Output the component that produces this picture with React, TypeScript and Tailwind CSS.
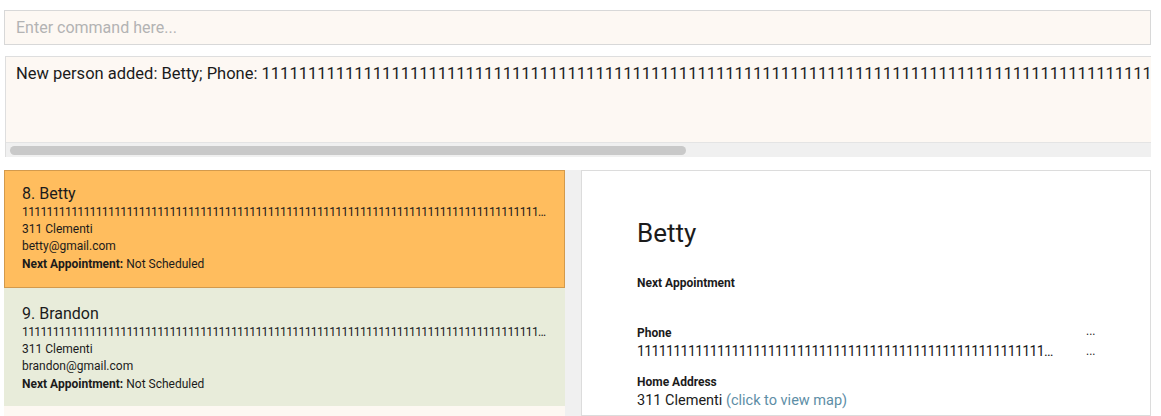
const font = { fontFamily: "Roboto, 'Liberation Sans', sans-serif" };

const ones = (n: number) => "1".repeat(n);

type Person = { idx: number; name: string; email: string; selected?: boolean };

const people: Person[] = [
  { idx: 8, name: "Betty", email: "betty@gmail.com", selected: true },
  { idx: 9, name: "Brandon", email: "brandon@gmail.com" },
];

const PersonCard = ({ p }: { p: Person }) => (
  <div
    className={
      p.selected
        ? "h-[118px] border border-[#d39a4c] bg-[#ffbd5e] pl-[17px] pt-[13px] text-[#1b1b1b]"
        : "h-[118px] bg-[#e8ecda] pl-[18px] pt-[16px] text-[#1b1b1b]"
    }
  >
    <div className="text-[16px] leading-[20px]">
      {p.idx}. {p.name}
    </div>
    <div className="w-[528px] truncate text-[12px] leading-[17px] tracking-[-0.6px]">
      {ones(120)}
    </div>
    <div className="text-[12px] leading-[17px]">311 Clementi</div>
    <div className="text-[12px] leading-[17px]">{p.email}</div>
    <div className="text-[12px] leading-[18px]">
      <span className="font-bold">Next Appointment:</span> Not Scheduled
    </div>
  </div>
);

export default function App() {
  return (
    <div className="h-[416px] w-[1161px] overflow-hidden bg-white" style={font}>
      <div className="pl-[4px] pr-[10px] pt-[10px]">
        <div className="flex h-[35px] items-center border border-[#d8d8d8] bg-[#fdf8f3] pl-[11px] text-[16px] text-[#b3b3b3]">
          Enter command here...
        </div>
        <div className="ml-[1px] mt-[11px] border-l border-t border-[#dedede] bg-[#fdf8f3]">
          <div className="h-[85px] overflow-hidden whitespace-nowrap pl-[10px] pt-[5px] text-[16.5px] leading-[24px] text-[#1b1b1b]">
            New person added: Betty; Phone: {ones(140)}
          </div>
          <div className="flex h-[15px] items-center border-t border-[#e4e4e4] bg-[#f0f0f0] px-[4px]">
            <div className="h-[9px] w-[676px] rounded-full bg-[#c9c9c9]" />
          </div>
        </div>
        <div className="mt-[13px] flex h-[246px]">
          <div className="flex w-[561px] flex-col bg-[#fdf8f2]">
            {people.map((p) => (
              <PersonCard key={p.idx} p={p} />
            ))}
          </div>
          <div className="w-[16px] bg-[#f0f0f0]" />
          <div className="flex-1 border border-[#dcdcdc] bg-white pl-[55px] pt-[44px] text-[#1b1b1b]">
            <div className="text-[26px] leading-[36px]">Betty</div>
            <div className="mt-[24px] text-[12px] font-bold leading-[16px]">Next Appointment</div>
            <div className="mt-[34px] flex">
              <div className="w-[449px]">
                <div className="text-[12px] font-bold leading-[16px]">Phone</div>
                <div className="w-[418px] truncate text-[14px] leading-[20px] tracking-[-0.6px]">
                  {ones(80)}
                </div>
              </div>
              <div className="text-[12px]">
                <div className="h-[18px] leading-[12px]">...</div>
                <div className="leading-[16px]">...</div>
              </div>
            </div>
            <div className="mt-[13px] text-[12px] font-bold leading-[16px]">Home Address</div>
            <div className="mt-[1px] text-[14.5px] leading-[20px]">
              311 Clementi <span className="text-[#5d8ea6]">(click to view map)</span>
            </div>
          </div>
        </div>
      </div>
    </div>
  );
}
